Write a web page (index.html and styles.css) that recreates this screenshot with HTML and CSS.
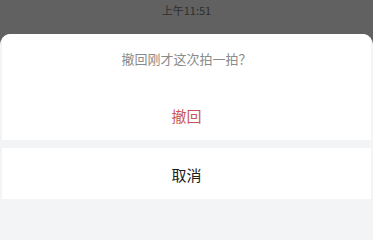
FILE: index.html
```html
<!DOCTYPE html>
<html lang="zh">
<head>
<meta charset="utf-8">
<link rel="stylesheet" href="styles.css">
</head>
<body>
<div class="screen">
  <div class="status">上午11:51</div>
  <div class="sheet">
    <div class="group">
      <div class="title">撤回刚才这次拍一拍？</div>
      <div class="action danger">撤回</div>
    </div>
    <div class="group cancel">
      <div class="action">取消</div>
    </div>
  </div>
</div>
</body>
</html>
```

FILE: styles.css
```css
html, body {
  margin: 0;
  padding: 0;
}
body {
  width: 373px;
  height: 223px;
  overflow: hidden;
  background: #f3f4f6;
  font-family: "Noto Sans CJK SC", "Liberation Sans", sans-serif;
}
.screen {
  display: flex;
  flex-direction: column;
  height: 223px;
  background: #616161;
}
.status {
  height: 34px;
  box-sizing: border-box;
  padding-top: 3px;
  text-align: center;
  font-size: 11px;
  line-height: 14px;
  color: #2e2e2e;
}
.sheet {
  flex: 1;
  background: #f3f4f6;
  border-radius: 11px 11px 0 0;
  overflow: hidden;
  display: flex;
  flex-direction: column;
  gap: 8px;
}
.group {
  background: #ffffff;
  margin: 0 2px;
}
.title {
  height: 50px;
  box-sizing: border-box;
  padding-top: 16px;
  text-align: center;
  font-size: 13px;
  line-height: 18px;
  color: #8a8a8a;
}
.action {
  height: 56px;
  display: flex;
  align-items: center;
  justify-content: center;
  font-size: 15px;
  color: #1c1c1c;
}
.danger {
  color: #c85656;
  padding-top: 6px;
  box-sizing: border-box;
}
.cancel .action {
  height: 51px;
  padding-top: 2px;
  box-sizing: border-box;
}
```
